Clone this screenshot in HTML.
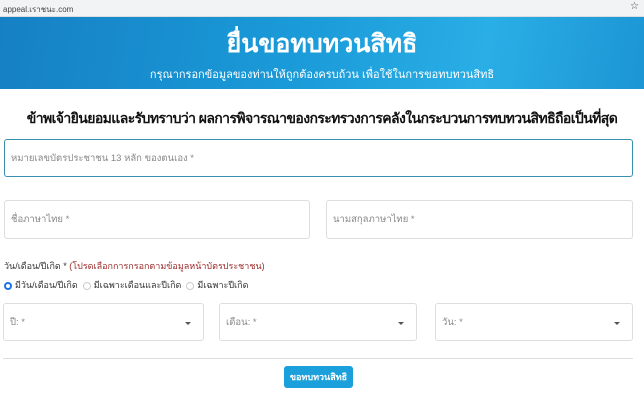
<!DOCTYPE html>
<html><head><meta charset="utf-8"><style>
body{margin:0;width:644px;height:401px;overflow:hidden;background:#fff;font-family:"Liberation Sans",sans-serif;position:relative}
.a{position:absolute}
.bar{left:0;top:0;width:644px;height:16px;background:#f1f3f4;border-bottom:1px solid #ddd;font-size:8px;color:#444}
.hdr{left:0;top:17px;width:644px;height:72px;background:linear-gradient(100deg,#1680c4 0%,#1a9ad8 45%,#2aaee6 75%,#1c95d4 100%);color:#fff;text-align:center}
.in{border:1px solid #ddd;border-radius:3px;box-sizing:border-box;font-size:9.5px;color:#888;padding-left:6px;display:flex;align-items:center}
.car{position:absolute;right:12px;top:18px;border-left:3px solid transparent;border-right:3px solid transparent;border-top:3px solid #555}
.rad{width:8px;height:8px;border-radius:50%;border:1px solid #ccc;box-sizing:border-box;display:inline-block;vertical-align:middle;margin-right:3px}
</style></head><body>
<div class="a bar"><span style="position:absolute;left:3px;top:3px">appeal.เราชนะ.com</span><span style="position:absolute;right:5px;top:1px;font-size:10px">☆</span></div>
<div class="a hdr"><div style="font-size:25px;font-weight:bold;margin-top:10px;line-height:34px">ยื่นขอทบทวนสิทธิ</div><div style="font-size:11px;margin-top:4px">กรุณากรอกข้อมูลของท่านให้ถูกต้องครบถ้วน เพื่อใช้ในการขอทบทวนสิทธิ</div></div>
<div class="a" style="left:0;top:108px;width:644px;text-align:center;font-size:14px;font-weight:bold;color:#111;white-space:nowrap;letter-spacing:-0.6px">ข้าพเจ้ายินยอมและรับทราบว่า ผลการพิจารณาของกระทรวงการคลังในกระบวนการทบทวนสิทธิถือเป็นที่สุด</div>
<div class="a in" style="left:4px;top:139px;width:629px;height:38px;border:1.5px solid #3a8fb0">หมายเลขบัตรประชาชน 13 หลัก ของตนเอง *</div>
<div class="a in" style="left:4px;top:200px;width:306px;height:39px">ชื่อภาษาไทย *</div>
<div class="a in" style="left:326px;top:200px;width:307px;height:39px">นามสกุลภาษาไทย *</div>
<div class="a" style="left:4px;top:259px;font-size:9px;color:#333">วัน/เดือน/ปีเกิด * <span style="color:#9b2a2a">(โปรดเลือกการกรอกตามข้อมูลหน้าบัตรประชาชน)</span></div>
<div class="a" style="left:4px;top:278px;font-size:9px;color:#333"><span class="rad" style="border:2.5px solid #1a73e8"></span>มีวัน/เดือน/ปีเกิด &nbsp;<span class="rad"></span>มีเฉพาะเดือนและปีเกิด &nbsp;<span class="rad"></span>มีเฉพาะปีเกิด</div>
<div class="a in" style="left:3px;top:303px;width:201px;height:38px">ปี: *<span class="car"></span></div>
<div class="a in" style="left:219px;top:303px;width:198px;height:38px">เดือน: *<span class="car"></span></div>
<div class="a in" style="left:435px;top:303px;width:198px;height:38px">วัน: *<span class="car"></span></div>
<div class="a" style="left:3px;top:358px;width:630px;height:1px;background:#ddd"></div>
<div class="a" style="left:284px;top:366px;width:69px;height:22px;background:#1ba0dc;border-radius:3px;color:#fff;font-size:9px;font-weight:bold;text-align:center;line-height:22px">ขอทบทวนสิทธิ</div>
</body></html>
